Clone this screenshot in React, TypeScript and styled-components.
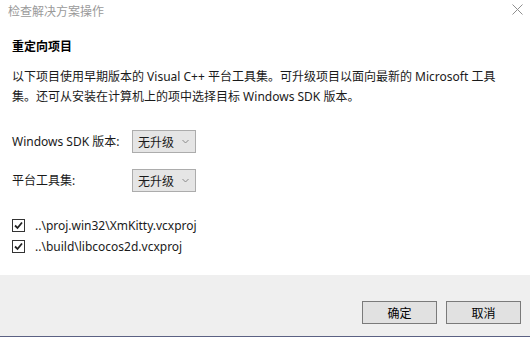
import React from 'react';
import styled, { createGlobalStyle } from 'styled-components';

const GlobalStyle = createGlobalStyle`
  html, body {
    margin: 0;
    padding: 0;
    background: #ffffff;
  }
  body {
    font-family: "Segoe UI", "Noto Sans", "Noto Sans CJK SC", sans-serif;
    font-size: 12px;
    color: #1a1a1a;
  }
`;

const Dialog = styled('div')`
  width: 530px;
  height: 337px;
  display: flex;
  flex-direction: column;
  background: #ffffff;
  box-sizing: border-box;
`;

const TitleBar = styled('div')`
  height: 22px;
  display: flex;
  align-items: center;
  justify-content: space-between;
  padding: 0 7px 0 8px;
  color: #9a9a9a;
  font-size: 12px;
`;

const CloseBtn = styled('button')`
  width: 12px;
  height: 12px;
  padding: 0;
  border: none;
  background: none;
  display: flex;
  align-items: center;
  justify-content: center;
  margin-top: -3px;
`;

const Content = styled('div')`
  padding: 0 12px;
`;

const Heading = styled('h2')`
  margin: 15px 0 0;
  font-size: 12px;
  line-height: 20px;
  font-weight: bold;
  color: #000;
`;

const Description = styled('p')`
  margin: 10px 0 0;
  line-height: 20px;
  color: #1a1a1a;
`;

const FormGrid = styled('div')`
  margin-top: 23px;
  display: grid;
  grid-template-columns: 120px auto;
  row-gap: 16px;
  align-items: center;
  justify-items: start;
`;

const Label = styled('span')`
  line-height: 23px;
`;

const Select = styled('div')`
  width: 64px;
  height: 23px;
  box-sizing: border-box;
  border: 1px solid #acacac;
  background: #e5e5e5;
  display: flex;
  align-items: center;
  justify-content: space-between;
  padding: 0 6px 0 5px;
`;

const CheckList = styled('div')`
  margin-top: 23px;
  display: flex;
  flex-direction: column;
`;

const CheckRow = styled('label')`
  display: flex;
  align-items: center;
  gap: 10px;
  line-height: 21px;
`;

const Box = styled('span')`
  width: 13px;
  height: 13px;
  box-sizing: border-box;
  border: 1px solid #333;
  background: #fff;
  display: flex;
  align-items: center;
  justify-content: center;
`;

const Footer = styled('div')`
  margin-top: auto;
  height: 62px;
  box-sizing: border-box;
  background: #efefef;
  border-bottom: 1px solid #5b6183;
  display: flex;
  justify-content: flex-end;
  align-items: flex-start;
  gap: 9px;
  padding: 26px 9px 0 0;
`;

const Button = styled('button')`
  width: 75px;
  height: 23px;
  box-sizing: border-box;
  border: 1px solid #7a7a7a;
  background: #e1e1e1;
  font-family: inherit;
  font-size: 12px;
  color: #000;
  padding: 0;
`;

function Chevron() {
  return (
    <svg width="7" height="5" viewBox="0 0 7 5">
      <path d="M0.5 1 L3.5 4 L6.5 1" fill="none" stroke="#8a8a8a" strokeWidth="1" />
    </svg>
  );
}

function Check() {
  return (
    <svg width="9" height="9" viewBox="0 0 9 9">
      <path d="M1 4.5 L3.5 7 L8 1.5" fill="none" stroke="#222" strokeWidth="1.8" />
    </svg>
  );
}

function Checkbox({ children }: { children: React.ReactNode }) {
  return (
    <CheckRow>
      <Box><Check /></Box>
      <span>{children}</span>
    </CheckRow>
  );
}

export default function App() {
  return (
    <Dialog>
      <GlobalStyle />
      <TitleBar>
        <span>检查解决方案操作</span>
        <CloseBtn aria-label="关闭">
          <svg width="11" height="11" viewBox="0 0 11 11">
            <path d="M0.5 0.5 L10.5 10.5 M10.5 0.5 L0.5 10.5" stroke="#8f8f8f" strokeWidth="1" />
          </svg>
        </CloseBtn>
      </TitleBar>
      <Content>
        <Heading>重定向项目</Heading>
        <Description>
          以下项目使用早期版本的 Visual C++ 平台工具集。可升级项目以面向最新的 Microsoft 工具集。还可从安装在计算机上的项中选择目标 Windows SDK 版本。
        </Description>
        <FormGrid>
          <Label>Windows SDK 版本:</Label>
          <Select>无升级<Chevron /></Select>
          <Label>平台工具集:</Label>
          <Select>无升级<Chevron /></Select>
        </FormGrid>
        <CheckList>
          <Checkbox>..\proj.win32\XmKitty.vcxproj</Checkbox>
          <Checkbox>..\build\libcocos2d.vcxproj</Checkbox>
        </CheckList>
      </Content>
      <Footer>
        <Button>确定</Button>
        <Button>取消</Button>
      </Footer>
    </Dialog>
  );
}
